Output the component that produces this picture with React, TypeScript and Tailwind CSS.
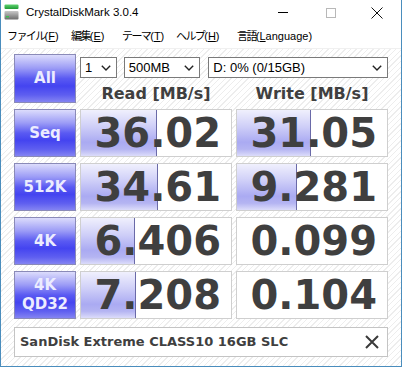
import type { ReactNode } from "react"

type Row = {
  label: ReactNode
  read: string
  write: string
  readBar: number
  writeBar: number
}

const rows: Row[] = [
  { label: "Seq", read: "36.02", write: "31.05", readBar: 76, writeBar: 74 },
  { label: "512K", read: "34.61", write: "9.281", readBar: 77, writeBar: 60 },
  { label: "4K", read: "6.406", write: "0.099", readBar: 54, writeBar: 0 },
  {
    label: (
      <span className="flex flex-col items-center leading-[19px]">
        <span>4K</span>
        <span>QD32</span>
      </span>
    ),
    read: "7.208",
    write: "0.104",
    readBar: 55,
    writeBar: 0,
  },
]

function AppIcon() {
  return (
    <svg width="16" height="17" viewBox="0 0 16 17" className="shrink-0">
      <defs>
        <linearGradient id="g" x1="0" y1="0" x2="0" y2="1">
          <stop offset="0" stopColor="#5fd36f" />
          <stop offset="1" stopColor="#1f9a35" />
        </linearGradient>
        <linearGradient id="d" x1="0" y1="0" x2="0" y2="1">
          <stop offset="0" stopColor="#c9c9c9" />
          <stop offset="0.5" stopColor="#9a9a9a" />
          <stop offset="1" stopColor="#6d6d6d" />
        </linearGradient>
      </defs>
      <rect x="0.5" y="0.5" width="14" height="4.5" rx="1" fill="url(#g)" />
      <rect x="0.5" y="7" width="14" height="8.5" rx="1" fill="url(#d)" />
      <rect x="2" y="12" width="3" height="1.5" fill="#3cc050" />
    </svg>
  )
}

function Combo({ width, text }: { width: string; text: string }) {
  return (
    <div
      className={`${width} flex h-[21px] items-center justify-between border border-[#7a7a7a] bg-white pl-[4px] pr-[5px] text-[13px] text-black`}
    >
      <span>{text}</span>
      <svg width="10" height="6" viewBox="0 0 10 6">
        <path d="M0.8 0.8 L5 5 L9.2 0.8" fill="none" stroke="#222" strokeWidth="1.4" />
      </svg>
    </div>
  )
}

function Label({ children }: { children: ReactNode }) {
  return (
    <div className="flex items-center justify-center border border-[#8a8ab8] bg-[linear-gradient(180deg,#dcdcfc_0%,#9c9cf6_28%,#5a5af2_50%,#4444f0_66%,#5e5ef0_85%,#8484f2_100%)] font-['DejaVu_Sans',sans-serif] text-[15px] font-bold text-[#ececff]">
      {children}
    </div>
  )
}

function Value({ value, bar }: { value: string; bar: number }) {
  return (
    <div className="relative overflow-hidden border border-[#cfcfcf] bg-white">
      {bar > 0 && (
        <div
          className="absolute inset-y-0 left-0 border-r border-[#6a6aa8] bg-[linear-gradient(180deg,#f0f0fd_0%,#d0d0f8_35%,#aaaaf2_70%,#b4b4f2_85%,#dcdcfa_100%)]"
          style={{ width: bar }}
        />
      )}
      <div className="relative flex h-full items-center justify-end pr-[10px] font-['DejaVu_Sans',sans-serif] text-[40px] font-bold leading-none text-[#3f3f3f]">
        {value}
      </div>
    </div>
  )
}

function MenuItem({ jp, pre, key1, post, width }: { jp: string; pre: string; key1: string; post: string; width: string }) {
  return (
    <span className={`${width} whitespace-nowrap`}>
      <span className="tracking-[-1.6px]">{jp}</span>
      {pre}
      <span className="underline">{key1}</span>
      {post}
    </span>
  )
}

export default function App() {
  return (
    <div className="flex h-[367px] w-[402px] flex-col border-x border-b border-[#4a8dbd] bg-white font-['Liberation_Sans','Noto_Sans_CJK_JP',sans-serif]">
      {/* title bar */}
      <div className="flex h-[25px] shrink-0 items-center pl-[3px] text-black">
        <AppIcon />
        <span className="ml-[6px] text-[11.5px]">CrystalDiskMark 3.0.4</span>
        <div className="ml-auto flex items-center">
          <div className="flex w-[46px] justify-center pr-[6px]">
            <div className="h-px w-[10px] bg-black" />
          </div>
          <div className="flex w-[46px] justify-center pr-[2px]">
            <div className="h-[10px] w-[10px] border border-[#b8b8b8]" />
          </div>
          <div className="flex w-[46px] justify-center pr-[2px]">
            <svg width="12" height="12" viewBox="0 0 12 12">
              <path d="M0.5 0.5 L11.5 11.5 M11.5 0.5 L0.5 11.5" stroke="#111" strokeWidth="1" />
            </svg>
          </div>
        </div>
      </div>

      {/* menu bar */}
      <div className="flex h-[24px] shrink-0 items-center border-b border-[#f0f0f0] pl-[6px] text-[11px] text-black">
        <MenuItem width="w-[64px]" jp="ファイル" pre="(" key1="F" post=")" />
        <MenuItem width="w-[51px]" jp="編集" pre="(" key1="E" post=")" />
        <MenuItem width="w-[54px]" jp="テーマ" pre="(" key1="T" post=")" />
        <MenuItem width="w-[61px]" jp="ヘルプ" pre="(" key1="H" post=")" />
        <MenuItem width="w-[90px]" jp="言語" pre="(" key1="L" post="anguage)" />
      </div>

      {/* client */}
      <div className="flex flex-1 flex-col bg-[repeating-linear-gradient(135deg,#ffffff_0px,#ffffff_3px,#ededed_3px,#ededed_4px)] pl-[13px] pt-[5px]">
        <div className="grid grid-cols-[62px_152px_152px] grid-rows-[49px_48px_48px_48px_48px] gap-x-[4px] gap-y-[6px]">
          <Label>All</Label>
          <div className="col-span-2 flex flex-col">
            <div className="mt-[3px] flex gap-[7px]">
              <Combo width="w-[37px]" text="1" />
              <Combo width="w-[77px]" text="500MB" />
              <Combo width="w-[181px] ml-[1px]" text="D: 0% (0/15GB)" />
            </div>
            <div className="mt-[6px] grid grid-cols-[152px_152px] gap-x-[4px] font-['DejaVu_Sans',sans-serif] text-[16px] font-bold leading-[20px] text-[#3f3f3f]">
              <div className="text-center">Read [MB/s]</div>
              <div className="text-center">Write [MB/s]</div>
            </div>
          </div>
          {rows.map((r, i) => (
            <div key={i} className="contents">
              <Label>{r.label}</Label>
              <Value value={r.read} bar={r.readBar} />
              <Value value={r.write} bar={r.writeBar} />
            </div>
          ))}
        </div>

        <div className="mt-[8px] flex h-[30px] w-[374px] items-center justify-between border border-[#c4c4c4] bg-white pl-[5px] pr-[8px]">
          <span className="font-['DejaVu_Sans',sans-serif] text-[13px] font-bold text-[#3f3f3f]">
            SanDisk Extreme CLASS10 16GB SLC
          </span>
          <svg width="14" height="14" viewBox="0 0 14 14">
            <path d="M1 1 L13 13 M13 1 L1 13" stroke="#3a3a3a" strokeWidth="2" />
          </svg>
        </div>
      </div>
    </div>
  )
}
